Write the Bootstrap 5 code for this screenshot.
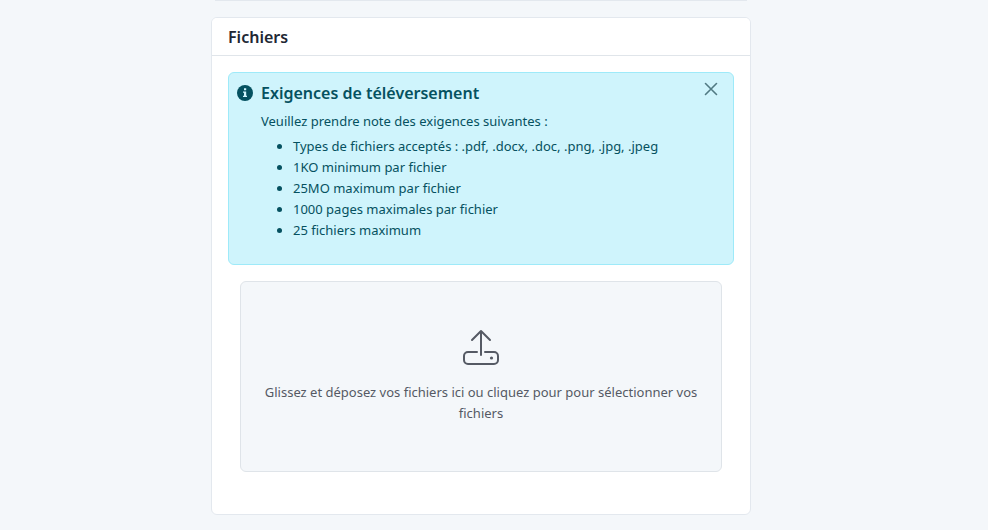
<!DOCTYPE html>
<html lang="fr">
<head>
<meta charset="utf-8">
<meta name="viewport" content="width=device-width, initial-scale=1">
<title>Fichiers</title>
<link href="https://cdn.jsdelivr.net/npm/bootstrap@5.3.0/dist/css/bootstrap.min.css" rel="stylesheet">
<style>
body { background: #f4f7fa; color: #212733; font-family: "Noto Sans", "Open Sans", sans-serif; font-size: 13px; line-height: 21px; }
.page { padding-right: 26px; }
.column { max-width: 540px; }
.panel { border-color: #e3e8ee; border-radius: 6px; }
.panel-end { height: 1px; background: #e3e8ee; }
.panel .card-header { background: #fff; border-color: #e0e5ea; padding: 8px 16px 7px; }
.title { font-size: 16px; font-weight: 600; line-height: 22px; margin: 0; }
.notice { background: #cff4fc; border: 1px solid #9eeaf9; color: #055160; border-radius: 6px; padding: 8px; gap: 8px; min-height: 193px; }
.notice .title { line-height: 24px; margin-bottom: 6px; }
.notice ul { padding-left: 32px; }
.dismiss { margin-right: 7px; line-height: 0; color: #517a83; }
.drop { background: #f4f7fa; border: 1px solid #dfe4e9; border-radius: 6px; color: #555a64; padding: 46px 16px 47px; margin: 0 12px 26px; cursor: pointer; }
.drop svg { margin-bottom: 16px; }
</style>
</head>
<body>
<main class="page">
  <div class="column mx-auto">
    <div class="panel-end mx-1"></div>
    <section class="card panel mt-3">
      <div class="card-header"><h2 class="title">Fichiers</h2></div>
      <div class="card-body p-3">
        <div class="notice d-flex align-items-start mb-3" role="alert">
          <svg class="flex-shrink-0 mt-1" width="16" height="16" viewBox="0 0 16 16" fill="currentColor" aria-hidden="true"><circle cx="8" cy="8" r="8"/><path d="M7 3.3h2.2v2H7zM6 6.5h3.2v4.2H10V12H6v-1.3h1V7.8H6z" fill="#cff4fc"/></svg>
          <div class="flex-grow-1">
            <h3 class="title">Exigences de téléversement</h3>
            <p class="mb-1">Veuillez prendre note des exigences suivantes :</p>
            <ul class="mb-0">
              <li>Types de fichiers acceptés : .pdf, .docx, .doc, .png, .jpg, .jpeg</li>
              <li>1KO minimum par fichier</li>
              <li>25MO maximum par fichier</li>
              <li>1000 pages maximales par fichier</li>
              <li>25 fichiers maximum</li>
            </ul>
          </div>
          <button type="button" class="dismiss btn border-0 p-0 flex-shrink-0" aria-label="Fermer"><svg class="d-block" width="14" height="16" viewBox="0 0 14 16" fill="none" stroke="currentColor" stroke-width="1.6" stroke-linecap="round"><path d="M1.5 2.5l11 11M12.5 2.5l-11 11"/></svg></button>
        </div>
        <label class="drop d-block text-center" for="files">
          <svg class="d-block mx-auto" width="38" height="38" viewBox="0 0 38 38" fill="none" stroke="currentColor" stroke-width="2" stroke-linecap="round" stroke-linejoin="round" aria-hidden="true"><path d="M19 27V3M10 12l9-9 9 9M15 24H6a4 4 0 0 0-4 4v4a4 4 0 0 0 4 4h26a4 4 0 0 0 4-4v-4a4 4 0 0 0-4-4h-9"/><circle cx="29.5" cy="30" r="1.6" fill="currentColor" stroke="none"/></svg>
          Glissez et déposez vos fichiers ici ou cliquez pour pour sélectionner vos fichiers
        </label>
        <input class="visually-hidden" type="file" id="files" multiple accept=".pdf,.docx,.doc,.png,.jpg,.jpeg">
      </div>
    </section>
  </div>
</main>
<script src="https://cdn.jsdelivr.net/npm/bootstrap@5.3.0/dist/js/bootstrap.bundle.min.js"></script>
</body>
</html>
